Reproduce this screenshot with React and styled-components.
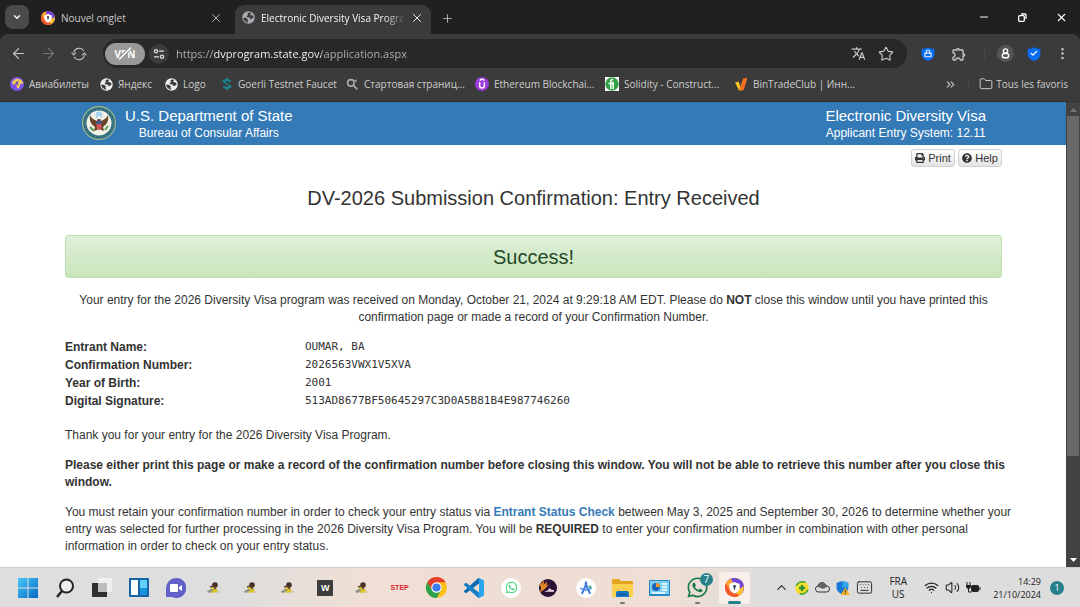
import React from 'react';
import styled, { createGlobalStyle, css } from 'styled-components';
import { ArrowLeft, ArrowRight, ChevronDown, ChevronUp, ChevronsRight, EllipsisVertical, Folder, Minus, Plus, Star, X, Wifi, Volume2, Keyboard, Lock, Check } from 'lucide-react';
import { FaPrint, FaQuestionCircle, FaWhatsapp } from 'react-icons/fa';
import { MdOutlineExtension, MdTranslate } from 'react-icons/md';

const UI = `'Open Sans', 'Noto Sans', sans-serif`;
const PAGE = `'Liberation Sans', Arial, sans-serif`;

const Global = createGlobalStyle`
  *, *::before, *::after { box-sizing: border-box; }
  body { margin: 0; overflow: hidden; background: #fff; }
  button, input { font: inherit; color: inherit; }
  svg { display: block; flex: none; }
`;

const Desktop = styled.div`
  display: flex;
  flex-direction: column;
  height: 100vh;
  font-family: ${UI};
  font-size: 10px;
`;

const plain = css`
  border: 0;
  padding: 0;
  background: none;
  display: flex;
  align-items: center;
  justify-content: center;
  flex: none;
`;

/* ---------- browser chrome ---------- */
const TabStrip = styled.header`
  display: flex;
  align-items: flex-end;
  background: #202020;
  color: #d2d2d2;
  height: 34px;
  padding-left: 5px;
  flex: none;
`;

const TabMenu = styled.button`
  ${plain}
  width: 24px;
  height: 24px;
  margin: 0 2px 5px 0;
  border-radius: 8px;
  background: #4a4a4a;
  color: #fff;
`;

const Tab = styled.div`
  display: flex;
  align-items: center;
  gap: 6px;
  height: 29px;
  width: ${p => (p.$active ? 196 : 204)}px;
  padding: 0 ${p => (p.$active ? 6 : 11)}px 4px ${p => (p.$active ? 7 : 10)}px;
  border-radius: 9px 9px 0 0;
  background: ${p => (p.$active ? '#3b3b3b' : 'transparent')};
  color: ${p => (p.$active ? '#f4f4f4' : '#cacaca')};
`;

const TabTitle = styled.span`
  flex: 1;
  min-width: 0;
  overflow: hidden;
  white-space: nowrap;
  ${p => p.$fade && css`mask-image: linear-gradient(90deg, #000 86%, transparent 103%);`}
`;

const IconButton = styled.button`
  ${plain}
  width: ${p => p.$w || 16}px;
  height: ${p => p.$h || 20}px;
  color: ${p => p.$color || '#c8c8c8'};
`;

const NewTab = styled(IconButton)`
  margin: 0 0 6px 8px;
`;

const WindowControls = styled.div`
  display: flex;
  margin-left: auto;
  height: 34px;
  color: #fff;
`;

const Toolbar = styled.div`
  background: #202020;
  flex: none;
`;

const ToolbarInner = styled.div`
  display: flex;
  align-items: center;
  height: 39px;
  padding: 0 2px 0 8px;
  background: #3b3b3b;
  border-radius: 8px 8px 0 0;
`;

const NavGroup = styled.div`
  display: flex;
  gap: 9px;
  margin-right: 14px;
`;

const AddressBar = styled.form`
  display: flex;
  align-items: center;
  flex: 1;
  height: 29px;
  padding: 0 10px 0 2px;
  border-radius: 15px;
  background: #282828;
  gap: 4px;
`;

const Vpn = styled.button`
  ${plain}
  position: relative;
  width: 40px;
  height: 22px;
  border-radius: 11px;
  background: #999;
  color: #fff;
  font-weight: 700;
  svg { position: absolute; }
`;

const SiteInfo = styled.button`
  ${plain}
  width: 20px;
  height: 20px;
  border-radius: 10px;
  background: #3b3b3b;
`;

const Address = styled.input`
  flex: 1;
  min-width: 0;
  border: 0;
  outline: 0;
  padding: 0 0 0 3px;
  font-size: 11px;
  background: linear-gradient(90deg, #b4b4b4 0 41px, #fff 41px 148px, #b4b4b4 148px);
  background-clip: text;
  color: transparent;
`;

const ToolbarEnd = styled.div`
  display: flex;
  align-items: center;
  margin-left: 12px;
`;

const Divider = styled.span`
  width: 1px;
  height: 12px;
  margin: 0 ${p => p.$gap}px;
  background: #484848;
`;

const Bookmarks = styled.nav`
  display: flex;
  align-items: center;
  height: 29px;
  padding: 0 12px 6px 10px;
  border-bottom: 1px solid #303030;
  background: #3b3b3b;
  color: #cdcdcd;
  flex: none;
`;

const Bookmark = styled.a`
  display: flex;
  align-items: center;
  gap: ${p => p.$gap || 5}px;
  width: ${p => p.$w}px;
  color: inherit;
  text-decoration: none;
  white-space: nowrap;
  flex: none;
`;

const BookmarksEnd = styled.div`
  display: flex;
  align-items: center;
  margin-left: auto;
`;

/* ---------- web page ---------- */
const Viewport = styled.div`
  display: flex;
  flex: 1;
  min-height: 0;
  background: #fff;
`;

const Page = styled.div`
  flex: 1;
  overflow: hidden;
  font-family: ${PAGE};
  font-size: 12px;
  line-height: 17px;
  color: #333;
`;

const Banner = styled.header`
  display: flex;
  align-items: flex-start;
  justify-content: space-between;
  height: 43px;
  padding: 4px 80px 0 82px;
  background: #337ab7;
  color: #fff;
  text-align: center;
`;

const Agency = styled.div`
  display: flex;
  gap: 9px;
`;

const BannerText = styled.div`
  font-size: 12px;
  line-height: 16px;
`;

const BannerTitle = styled.div`
  font-size: 15px;
  line-height: 19px;
`;

const Content = styled.main`
  padding: 4px 64px 0 65px;
`;

const Actions = styled.div`
  display: flex;
  justify-content: flex-end;
  gap: 3px;
`;

const ActionButton = styled.button`
  display: flex;
  align-items: center;
  justify-content: center;
  gap: 3px;
  min-width: 44px;
  height: 18px;
  padding: 0 3px;
  border: 1px solid #d0d0d0;
  border-radius: 3px;
  background: linear-gradient(#fff, #e4e4e4);
  font-size: 11px;
  line-height: 16px;
`;

const Title = styled.h1`
  margin: 19px 0 24px;
  font-size: 20px;
  font-weight: 400;
  line-height: 25px;
  text-align: center;
`;

const Alert = styled.div`
  height: 43px;
  border: 1px solid #bfe0b2;
  border-radius: 3px;
  background: linear-gradient(#dff0d8, #c8e5bc);
  color: #24472a;
  font-size: 20px;
  line-height: 42px;
  text-align: center;
`;

const Para = styled.p`
  margin: ${p => p.$top || 13}px 0 0;
  white-space: nowrap;
  text-align: ${p => (p.$center ? 'center' : 'left')};
  font-weight: ${p => (p.$bold ? 700 : 400)};
`;

const Details = styled.table`
  margin-top: 12px;
  border-collapse: collapse;
  line-height: 18px;
  th { width: 240px; padding: 0; text-align: left; }
  td { padding: 0; font-family: 'DejaVu Sans Mono', monospace; font-size: 11px; }
`;

const TextLink = styled.a`
  color: #337ab7;
  font-weight: 700;
  text-decoration: none;
`;

const Scrollbar = styled.div`
  display: flex;
  flex-direction: column;
  align-items: center;
  width: 14px;
  padding: 0 0 5px;
  background: #424242;
  flex: none;
`;

const ScrollThumb = styled.div`
  flex: 0 0 74%;
  width: 12px;
  background: #686868;
`;

const ScrollArrow = styled.svg`
  width: 7px;
  height: 4px;
  margin: ${p => (p.$end ? 'auto 0 0' : '6px 0 4px')};
  fill: ${p => (p.$end ? '#fff' : '#777')};
`;

/* ---------- taskbar ---------- */
const Taskbar = styled.footer`
  display: flex;
  align-items: center;
  justify-content: space-between;
  height: 40px;
  padding: 0 16px 0 9px;
  background: linear-gradient(90deg, #dedede 0 22%, #f0dfd4 34%, #eeddd4 50%, #f0dfd4 62%, #dddddd 71%);
  border-top: 1px solid #cfcbc8;
  color: #222;
  flex: none;
`;

const Apps = styled.div`
  display: grid;
  grid-template-columns: repeat(20, 1fr);
  width: 744px;
  flex: none;
`;

const AppButton = styled.button`
  ${plain}
  position: relative;
  height: 32px;
  margin: 0 3px;
  border-radius: 3px;
  background: ${p => (p.$active ? '#f8efea' : 'none')};
  &::after {
    content: '';
    position: absolute;
    bottom: 0;
    width: ${p => (p.$active ? 13 : 5)}px;
    height: ${p => (p.$active ? 3 : 2)}px;
    border-radius: 2px;
    background: ${p => (p.$active ? '#28808c' : p.$open ? '#777' : 'transparent')};
  }
`;

const Count = styled.span`
  position: absolute;
  top: 1px;
  right: 0;
  width: 13px;
  height: 13px;
  border-radius: 7px;
  background: #28808c;
  color: #fff;
  line-height: 13px;
  text-align: center;
`;

const Tray = styled.div`
  display: flex;
  align-items: center;
  gap: 6px;
`;

const Language = styled.div`
  width: 30px;
  margin: 0 5px 0 4px;
  line-height: 13px;
  text-align: center;
`;

const Clock = styled.time`
  margin: 0 3px 0 6px;
  font-size: 9px;
  line-height: 13px;
  text-align: right;
`;

const Notice = styled.span`
  width: 14px;
  height: 14px;
  border-radius: 7px;
  background: #28808c;
  color: #fff;
  font-size: 9px;
  line-height: 14px;
  text-align: center;
`;

/* ---------- drawings ---------- */
const Svg = ({ s = 20, h, box = '0 0 24 24', children }) => (
  <svg width={s} height={h || s} viewBox={box} fill="none" aria-hidden="true">{children}</svg>
);

const BrowserLogo = ({ s = 14 }) => (
  <Svg s={s}>
    <circle cx="12" cy="12" r="12" fill="#f5842a" />
    <path d="M2 5.500A12 12 0 0 1 24 12c0 3-1 6-3 8L17 7Z" fill="#7245d8" />
    <path d="M23.500 10A12 12 0 0 1 13 24l3-8Z" fill="#fbc32e" />
    <path d="M1 7A12 12 0 0 0 12 24c3 0 5-1 6-3L7 17Z" fill="#f2592b" />
    <path d="M1 7A12 12 0 0 1 8 1l2 5-6 4Z" fill="#fba42c" />
    <path d="M12 5 18.500 7.500V12c0 4-4 6.500-6.500 8-2.500-1.500-6.500-4-6.500-8V7.500Z" fill="#fff" />
    <circle cx="12" cy="10.500" r="1.800" fill="#333c55" /><path d="M11.200 11h1.600v4h-1.600z" fill="#333c55" />
  </Svg>
);

const Globe = ({ color = '#ececec' }) => (
  <Svg s={13}>
    <circle cx="12" cy="12" r="11.500" fill={color} />
    <path d="M14 2.500 9.500 5l2 2.500-3 1.500 1 2.500 4.500.5 2 3 3-1 2.500-2.500-1.500-3-3.500-.5-2-2.500 3-1.500ZM2 12.500h5l4 2.500-1 2.500 1.500 4.500-4-1.500C4 18 2.500 16 2 12.500Z" fill="#3b3b3b" />
  </Svg>
);

const Refresh = () => (
  <Svg s={16}>
    <path d="M4 10a8.500 8.500 0 0 1 15.500-2.500M20 14A8.500 8.500 0 0 1 4.500 16.500" stroke="#c8c8c8" strokeWidth="1.600" />
    <path d="m1 10 3 3.500L7.500 10M16.500 14l3.500-3.500 3 3.500" stroke="#c8c8c8" strokeWidth="1.600" />
  </Svg>
);

const Slash = () => (
  <Svg s={18} h={13} box="0 0 18 13">
    <path d="M4 12 14 1" stroke="#999" strokeWidth="4" /><path d="M3 12.500 15 .5" stroke="#fff" strokeWidth="1.400" />
  </Svg>
);

const Sliders = () => (
  <Svg s={12} box="0 0 12 12">
    <g stroke="#ddd" strokeWidth="1.300"><circle cx="3" cy="3.200" r="1.600" /><path d="M6 3.200h5M1 8.800h5" /><circle cx="9" cy="8.800" r="1.600" /></g>
  </Svg>
);

const Shield = ({ children }) => (
  <Svg s={14}><path d="M12 0c3 2.500 7 3 11 3v8c0 7-5 11-11 13C6 22 1 18 1 11V3c4 0 8-.5 11-3Z" fill="#0a6cf0" />{children}</Svg>
);

const Profile = () => (
  <Svg s={17}>
    <circle cx="12" cy="12" r="12" fill="#555" />
    <g stroke="#fff" strokeWidth="2"><circle cx="12" cy="8.500" r="3" /><rect x="7.500" y="12" width="9" height="6" rx="3" /></g>
  </Svg>
);

const Plane = () => (
  <Svg s={14}>
    <circle cx="12" cy="12" r="12" fill="#7b55ea" />
    <path d="M6 6c4-4 10-4 15 1l2 4-5 1-3 8-3-1-1-7-6 1-2-4Z" fill="#f0c75b" /><path d="m9 10 6-4-2 5 3 3-6-2Z" fill="#5d43a8" />
  </Svg>
);

const Goerli = () => (
  <Svg s={12} h={14} box="0 0 24 28">
    <g stroke="#168994" strokeWidth="2.500"><path d="m20 9-8-6-8 6 16 10-8 6-8-6" /><path d="m7 9.500 5-3 5 3M7 18.500l5 3 5-3" /></g>
  </Svg>
);

const StartPage = () => (
  <Svg s={13}><circle cx="9" cy="9" r="6" stroke="#aaa" strokeWidth="3" /><path d="m13 13 8 8M18 3v4" stroke="#aaa" strokeWidth="3" /></Svg>
);

const Unlock = () => (
  <Svg s={14}>
    <circle cx="12" cy="12" r="12" fill="#9a3bd8" />
    <path d="M8 9v6q0 4 4 4t4-4V9M8 6q4-4 8 0" stroke="#fff" strokeWidth="2.500" />
  </Svg>
);

const Solidity = () => (
  <Svg s={14}><path fill="#fff" d="M0 0h24v24H0z" /><circle cx="12" cy="12" r="11.500" fill="#2fa346" /><path d="M10 21V8q0-4 4-4M6 11h8M14 8v13" stroke="#fff" strokeWidth="2.500" /></Svg>
);

const BinTrade = () => (
  <Svg s={13}><path d="m0 8 7-1 5 17-5-2Z" fill="#ffc72c" /><path d="M15 1l8-1-7 22-9 1Z" fill="#f3701e" /></Svg>
);

const Seal = () => (
  <Svg s={34} box="0 0 34 34">
    <circle cx="17" cy="17" r="17" fill="#a5b98a" />
    <circle cx="17" cy="17" r="15.800" fill="#2b6c80" />
    <circle cx="17" cy="17" r="14" stroke="#6c9c95" strokeDasharray="1 1.500" />
    <circle cx="17" cy="17" r="12.500" fill="#f4f2e6" />
    <circle cx="17" cy="9" r="3.500" fill="#a9d2ec" />
    <path d="M8 9c1 3 4 5 7 6l1-3h2l1 3c3-1 6-3 7-6 1 6-1 9-5 12l1 4-5-2-5 2 1-4C9 18 7 15 8 9Z" fill="#69452b" />
    <path d="m16 10 2 0 1 3h-3Z" fill="#fff" />
    <path d="M14.500 17h5v4q0 2-2.500 3-2.500-1-2.500-3Z" fill="#d2545a" /><path d="M14.500 15h5v3h-5z" fill="#375a98" />
    <path d="m8 21 4 4M26 20l-3 4" stroke="#5c9a5c" strokeWidth="2" />
  </Svg>
);

const Windows = () => (
  <Svg s={20} box="0 0 20 20">
    <defs><linearGradient id="win" x1="0" y1="0" x2="1" y2="1"><stop stopColor="#48c8f6" /><stop offset="1" stopColor="#0567c4" /></linearGradient></defs>
    <path d="M0 0h9.500v9.500H0zM10.500 0H20v9.500h-9.500zM0 10.500h9.500V20H0zM10.500 10.500H20V20h-9.500z" fill="url(#win)" />
  </Svg>
);

const SearchMark = () => (
  <Svg s={20} box="0 0 20 20"><circle cx="11.500" cy="8" r="6.500" stroke="#222" strokeWidth="2" fill="#eee" /><path d="m7 13-5 6" stroke="#222" strokeWidth="2.500" /></Svg>
);

const TaskView = () => (
  <Svg s={20} box="0 0 20 20"><path d="M0 5h15v14H0z" fill="#303030" /><path d="M6 0h14v14H6z" fill="#f0f0f0" /><path d="M6 5h9v9H6z" fill="#bcbcbc" /></Svg>
);

const Widgets = () => (
  <Svg s={20} box="0 0 20 20"><rect width="20" height="19" rx="1" fill="#1465a8" /><path d="M2 2h7v15H2z" fill="#fff" /><path d="M11 2h7v8h-7z" fill="#62d1fa" /><path d="M11 10h7v7h-7z" fill="#1a94de" /></Svg>
);

const Chat = () => (
  <Svg s={20} box="0 0 20 20"><path d="M10 0a10 10 0 1 1-4 19H0V10A10 10 0 0 1 10 0Z" fill="#6361c8" /><rect x="4" y="6" width="8" height="8" rx="1" fill="#fff" /><path d="m13 9 3-2v6l-3-2Z" fill="#fff" /></Svg>
);

const Runner = () => (
  <Svg s={14} h={14} box="0 0 14 14">
    <path d="M0 11h13" stroke="#c9b98c" /><path d="m2 10 3-4 4 1 2 3-5 2Z" fill="#dfc522" /><path d="m0 10 5-2 2 1-5 3Z" fill="#8a9192" />
    <circle cx="8" cy="4" r="2.800" fill="#4b2f25" /><path d="m3 6 3-1 3 3" stroke="#57423a" strokeWidth="1.500" />
  </Svg>
);

const BadgeText = styled.span`
  width: ${p => (p.$dark ? 16 : 20)}px;
  height: 16px;
  border-radius: 1px;
  background: ${p => (p.$dark ? '#3c3c3c' : 'none')};
  color: ${p => (p.$dark ? '#fff' : '#d8262c')};
  font: 700 ${p => (p.$dark ? 9 : 7)}px/16px ${PAGE};
  text-align: center;
`;

const ChromeMark = () => (
  <Svg s={21}>
    <circle cx="12" cy="12" r="12" fill="#fbc116" />
    <path d="M12 12 6.800 15 1.600 6A12 12 0 0 1 22.400 6H12Z" fill="#e33b2e" />
    <path d="M1.600 6 6.800 15l5.200 3 2.500 0L12 24A12 12 0 0 1 1.600 6Z" fill="#2ba24c" />
    <path d="m17.200 15-5.200 9-1-.1L12 18Z" fill="#2ba24c" />
    <circle cx="12" cy="12" r="6" fill="#fff" /><circle cx="12" cy="12" r="4.700" fill="#3b7ded" />
  </Svg>
);

const Code = () => (
  <Svg s={20} box="0 0 100 100">
    <path d="M96.500 10.800 75.900.9a6.200 6.200 0 0 0-7.100 1.200L1.300 63.600a4.200 4.200 0 0 0 0 6.200l5.500 5a4.200 4.200 0 0 0 5.300.2L93.400 13.400A4.100 4.100 0 0 1 100 16.700Z" fill="#0f6cb2" />
    <path d="M96.500 89.200 75.900 99.100a6.200 6.200 0 0 1-7.100-1.200L1.300 36.400a4.200 4.200 0 0 1 0-6.200l5.500-5a4.200 4.200 0 0 1 5.300-.2l81.300 61.600A4.100 4.100 0 0 0 100 83.300Z" fill="#1680cb" />
    <path d="M75.900 99.100a6.200 6.200 0 0 1-7.100-1.200 3.700 3.700 0 0 0 6.200-2.600V4.700a3.700 3.700 0 0 0-6.200-2.600 6.200 6.200 0 0 1 7.100-1.200l20.600 9.900a6.200 6.200 0 0 1 3.500 5.600v67.200a6.200 6.200 0 0 1-3.500 5.600Z" fill="#2ba5ed" />
  </Svg>
);

const Round = styled.span`
  display: grid;
  place-items: center;
  width: 20px;
  height: 20px;
  border-radius: 10px;
  background: #fff;
`;

const Eclipse = () => (
  <Svg s={18}>
    <circle cx="12" cy="12" r="12" fill="#2b1237" /><path d="M1 8 7 2 6 8l5-5-1 6 4-2-7 7-6 4 2-6Z" fill="#e58a22" /><path d="M7 17h13v-2l-4-1-2-2-2 3Z" fill="#f4dbe8" />
  </Svg>
);

const Studio = () => (
  <Svg s={14}>
    <path d="m5 22 7-16 7 16" stroke="#3d7be0" strokeWidth="3.500" /><path d="M12 1v6" stroke="#3d7be0" strokeWidth="4" /><path d="M2 12q10 7 20 0" stroke="#4a86e8" strokeWidth="2.500" /><circle cx="19" cy="10" r="2.500" fill="#3bb977" />
  </Svg>
);

const Explorer = () => (
  <Svg s={21} h={20} box="0 0 21 20">
    <path d="M0 2q0-1 1-1h6l2 2h11q1 0 1 1v15H0Z" fill="#e3a51d" /><path d="M0 6h21v13H0z" fill="#fbd04d" /><path d="M4 19v-4q0-2 2-2h9q2 0 2 2v4Z" fill="#1973c4" /><path d="M7 16h7v1H7z" fill="#0d4f96" />
  </Svg>
);

const Control = () => (
  <Svg s={21} h={16} box="0 0 21 16">
    <rect width="21" height="16" rx="1" fill="#2689c4" /><path d="M1 1h19v13H1z" fill="#7bd0f5" /><circle cx="7" cy="7" r="4" fill="#1c62b6" /><path d="M7 7V3a4 4 0 0 1 4 4Z" fill="#f29330" /><path d="M13 4h5M13 7h5M13 10h5M3 13h13" stroke="#fff" strokeWidth="1.500" />
  </Svg>
);

const Antivirus = () => (
  <Svg s={14}><circle cx="12" cy="12" r="11.500" fill="#f4dc2a" /><path d="M2 8Q7-1 18 2M22 15q-4 9-14 7" stroke="#45a83b" strokeWidth="3" /><path d="M12 7v10M7 12h10" stroke="#289036" strokeWidth="4" /></Svg>
);

const Cloud = () => (
  <Svg s={15} h={11} box="0 0 15 11"><path d="M4 10a3 3 0 0 1-1-6 4 4 0 0 1 7-2 3 3 0 0 1 1.500 2 3 3 0 0 1 0 6Z" fill="#ddd" stroke="#333" /><path d="M3 4a4 4 0 0 1 7-2l2 3-4 2-5-2Z" fill="#666" /></Svg>
);

const Defender = () => (
  <Svg s={14}>
    <path d="M11 0 21 3v9c0 5-5 9-10 11C6 21 1 17 1 12V3Z" fill="#1478d4" /><path d="M11 0v11h10V3Z" fill="#33a7ee" /><path d="M16 11 24 24H8Z" fill="#fbb32b" /><path d="M16 15v5M16 21v2" stroke="#333" strokeWidth="1.500" />
  </Svg>
);

const Battery = () => (
  <Svg s={15} h={12} box="0 0 15 12"><rect x="5.500" y="3.500" width="7" height="6" rx="1" fill="#222" stroke="#222" /><path d="M14 5v3" stroke="#222" /><path d="M1 0v3M4 0v3M2.500 5v5h3" stroke="#222" /><path d="M0 3h5v2q-1 2-2.500 2T0 5Z" fill="#222" /></Svg>
);

const Restore = () => (
  <Svg s={9} box="0 0 9 9"><rect x=".7" y="2.700" width="5.600" height="5.600" rx="1" stroke="#fff" strokeWidth="1.300" /><path d="M3 1h4q1 0 1 1v4" stroke="#fff" strokeWidth="1.300" /></Svg>
);

const bookmarks = [
  ['Авиабилеты', 90, <Plane />],
  ['Яндекс', 65, <Globe />],
  ['Logo', 56, <Globe />],
  ['Goerli Testnet Faucet', 125, <Goerli />],
  ['Стартовая страниц...', 129, <StartPage />],
  ['Ethereum Blockchai...', 130, <Unlock />],
  ['Solidity - Construct...', 130, <Solidity />],
  ['BinTradeClub | Инн...', 120, <BinTrade />],
];

const apps = [
  ['Start', <Windows />], ['Search', <SearchMark />], ['Task view', <TaskView />], ['Widgets', <Widgets />], ['Chat', <Chat />],
  ['Runner', <Runner />], ['Runner', <Runner />], ['Runner', <Runner />], ['Word', <BadgeText $dark>W</BadgeText>], ['Runner', <Runner />],
  ['Step', <BadgeText>STEP</BadgeText>], ['Chrome', <ChromeMark />], ['Code', <Code />],
  ['WhatsApp', <Round><FaWhatsapp size={13} color="#38d070" /></Round>],
  ['Eclipse', <Eclipse />], ['Studio', <Round><Studio /></Round>],
  ['Explorer', <Explorer />, { $open: true }], ['Control panel', <Control />],
  ['WhatsApp', <><FaWhatsapp size={23} color="#187b49" /><Count>7</Count></>, { $open: true }],
  ['Browser', <BrowserLogo s={19} />, { $active: true }],
];

const entry = [
  ['Entrant Name:', 'OUMAR, BA'],
  ['Confirmation Number:', '2026563VWX1V5XVA'],
  ['Year of Birth:', '2001'],
  ['Digital Signature:', '513AD8677BF50645297C3D0A5B81B4E987746260'],
];

export default function App() {
  return (
    <Desktop>
      <Global />
      <TabStrip>
        <TabMenu aria-label="Tabs"><ChevronDown size={10} strokeWidth={3} /></TabMenu>
        <Tab>
          <BrowserLogo />
          <TabTitle>Nouvel onglet</TabTitle>
          <IconButton aria-label="Close"><X size={14} strokeWidth={1.5} /></IconButton>
        </Tab>
        <Tab $active>
          <Globe color="#a8abb0" />
          <TabTitle $fade>Electronic Diversity Visa Program</TabTitle>
          <IconButton aria-label="Close" $color="#fff"><X size={14} strokeWidth={1.5} /></IconButton>
        </Tab>
        <NewTab aria-label="New tab"><Plus size={13} strokeWidth={1.5} /></NewTab>
        <WindowControls>
          <IconButton aria-label="Minimise" $w={38} $h={34} $color="#fff"><Minus size={12} /></IconButton>
          <IconButton aria-label="Restore" $w={39} $h={34}><Restore /></IconButton>
          <IconButton aria-label="Close window" $w={38} $h={34} $color="#fff"><X size={13} strokeWidth={2} /></IconButton>
        </WindowControls>
      </TabStrip>

      <Toolbar>
        <ToolbarInner>
          <NavGroup>
            <IconButton aria-label="Back" $w={21}><ArrowLeft size={17} strokeWidth={1.5} /></IconButton>
            <IconButton aria-label="Forward" $w={21} $color="#777"><ArrowRight size={17} strokeWidth={1.5} /></IconButton>
            <IconButton aria-label="Reload" $w={21}><Refresh /></IconButton>
          </NavGroup>
          <AddressBar>
            <Vpn type="button">VPN<Slash /></Vpn>
            <SiteInfo type="button" aria-label="Site information"><Sliders /></SiteInfo>
            <Address aria-label="Address" defaultValue="https://dvprogram.state.gov/application.aspx" />
            <IconButton type="button" aria-label="Translate" $w={23}><MdTranslate size={15} /></IconButton>
            <IconButton type="button" aria-label="Favourite" $w={23}><Star size={16} strokeWidth={1.7} /></IconButton>
          </AddressBar>
          <ToolbarEnd>
            <IconButton aria-label="Blocker" $w={18}><Shield><g transform="translate(5 4)" stroke="#fff"><Lock size={14} strokeWidth={3} color="#fff" /></g></Shield></IconButton>
            <IconButton aria-label="Extensions" $w={44}><MdOutlineExtension size={16} /></IconButton>
            <Divider $gap={3} />
            <IconButton aria-label="Profile" $w={34}><Profile /></IconButton>
            <IconButton aria-label="Protection" $w={24}><Shield><g transform="translate(5 4)"><Check size={14} strokeWidth={4} color="#fff" /></g></Shield></IconButton>
            <IconButton aria-label="Menu" $w={32}><EllipsisVertical size={15} strokeWidth={2} /></IconButton>
          </ToolbarEnd>
        </ToolbarInner>
      </Toolbar>

      <Bookmarks>
        {bookmarks.map(([name, w, icon]) => <Bookmark key={name} href="#" $w={w}>{icon}{name}</Bookmark>)}
        <BookmarksEnd>
          <IconButton aria-label="More"><ChevronsRight size={13} /></IconButton>
          <Divider $gap={10} />
          <Bookmark href="#" $gap={3}><Folder size={14} strokeWidth={1.7} />Tous les favoris</Bookmark>
        </BookmarksEnd>
      </Bookmarks>

      <Viewport>
        <Page>
          <Banner>
            <Agency>
              <Seal />
              <BannerText><BannerTitle>U.S. Department of State</BannerTitle>Bureau of Consular Affairs</BannerText>
            </Agency>
            <BannerText><BannerTitle>Electronic Diversity Visa</BannerTitle>Applicant Entry System: 12.11</BannerText>
          </Banner>
          <Content>
            <Actions>
              <ActionButton><FaPrint size={10} />Print</ActionButton>
              <ActionButton><FaQuestionCircle size={10} />Help</ActionButton>
            </Actions>
            <Title>DV-2026 Submission Confirmation: Entry Received</Title>
            <Alert role="status">Success!</Alert>
            <Para $center $top={14}>
              Your entry for the 2026 Diversity Visa program was received on Monday, October 21, 2024 at 9:29:18 AM EDT. Please do <b>NOT</b> close this window until you have printed this<br />
              confirmation page or made a record of your Confirmation Number.
            </Para>
            <Details>
              <tbody>
                {entry.map(([k, v]) => <tr key={k}><th scope="row">{k}</th><td>{v}</td></tr>)}
              </tbody>
            </Details>
            <Para $top={17}>Thank you for your entry for the 2026 Diversity Visa Program.</Para>
            <Para $bold>
              Please either print this page or make a record of the confirmation number before closing this window. You will not be able to retrieve this number after you close this<br />
              window.
            </Para>
            <Para>
              You must retain your confirmation number in order to check your entry status via <TextLink href="#">Entrant Status Check</TextLink> between May 3, 2025 and September 30, 2026 to determine whether your<br />
              entry was selected for further processing in the 2026 Diversity Visa Program. You will be <b>REQUIRED</b> to enter your confirmation number in combination with other personal<br />
              information in order to check on your entry status.
            </Para>
          </Content>
        </Page>
        <Scrollbar>
          <ScrollArrow viewBox="0 0 7 4"><path d="M0 4 3.500 0 7 4Z" /></ScrollArrow>
          <ScrollThumb />
          <ScrollArrow $end viewBox="0 0 7 4"><path d="M0 0 3.500 4 7 0Z" /></ScrollArrow>
        </Scrollbar>
      </Viewport>

      <Taskbar>
        <Apps>
          {apps.map(([name, icon, state], i) => <AppButton key={i} aria-label={name} {...state}>{icon}</AppButton>)}
        </Apps>
        <Tray>
          <ChevronUp size={15} strokeWidth={1.7} />
          <Antivirus />
          <Cloud />
          <Defender />
          <Keyboard size={17} strokeWidth={1.3} />
          <Language>FRA<br />US</Language>
          <Wifi size={15} strokeWidth={2} />
          <Volume2 size={15} strokeWidth={1.7} />
          <Battery />
          <Clock>14:29<br />21/10/2024</Clock>
          <Notice>1</Notice>
        </Tray>
      </Taskbar>
    </Desktop>
  );
}
